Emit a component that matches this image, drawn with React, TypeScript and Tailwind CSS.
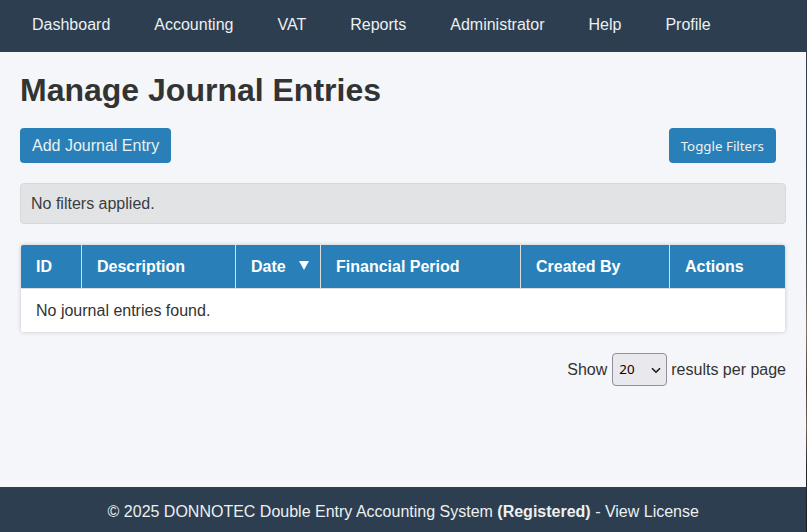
import React from "react";

const nav = ["Dashboard", "Accounting", "VAT", "Reports", "Administrator", "Help", "Profile"];

function Th({ w, children, last }: { w: string; children: React.ReactNode; last?: boolean }) {
  return (
    <div className={`${w} flex items-center px-[15px] font-bold text-white ${last ? "" : "border-r border-[#dddddd]"}`}>
      {children}
    </div>
  );
}

export default function App() {
  return (
    <div className="flex h-[532px] w-full bg-[linear-gradient(180deg,#2d3a4a_0%,#3b4552_40%,#5a5a5c_55%,#8a7468_62%,#4a3a36_72%,#7a6458_80%,#24242c_88%,#1e1e26_100%)]">
      <div className="flex h-full w-[806px] flex-col bg-[#f4f6f9] font-['Liberation_Sans',Arial,sans-serif] text-[16px] text-[#333333]">
        <nav className="flex h-[52px] items-center gap-[44px] bg-[#2c3e50] pb-[2px] pl-[32px] text-[#ecf0f1]">
          {nav.map((n) => (
            <span key={n}>{n}</span>
          ))}
        </nav>
        <main className="flex flex-1 flex-col px-[20px]">
          <h1 className="mt-[20px] text-[32px] leading-[37px] font-bold">Manage Journal Entries</h1>
          <div className="mt-[19px] flex items-center justify-between pr-[10px]">
            <button className="h-[35px] rounded-[4px] bg-[#2980b9] px-[12px] text-[#ecf0f1]">Add Journal Entry</button>
            <button className="h-[35px] rounded-[4px] bg-[#2980b9] px-[12px] pt-[2px] font-['Noto_Sans',sans-serif] text-[13.33px] text-[#ecf0f1]">
              Toggle Filters
            </button>
          </div>
          <div className="mt-[20px] flex h-[41px] items-center rounded-[4px] border border-[#d6d8db] bg-[#e2e3e5] px-[10px] text-[#383d41]">
            No filters applied.
          </div>
          <div className="mx-[1px] mt-[21px] rounded-[2px] bg-white shadow-[0_0_4px_rgba(0,0,0,0.2)]">
            <div className="flex h-[44px] rounded-t-[2px] border-b border-[#dddddd] bg-[#2980b9]">
              <Th w="w-[61px]">ID</Th>
              <Th w="w-[154px]">Description</Th>
              <Th w="w-[85px] justify-between">
                <span>Date</span>
                <svg width="10" height="9" viewBox="0 0 10 9" className="mb-[3px] -mr-[4px]">
                  <path d="M0 0H10L5 9Z" fill="#ffffff" />
                </svg>
              </Th>
              <Th w="w-[200px]">Financial Period</Th>
              <Th w="w-[149px]">Created By</Th>
              <Th w="flex-1" last>
                Actions
              </Th>
            </div>
            <div className="flex h-[43px] items-center px-[15px] pt-[1px]">No journal entries found.</div>
          </div>
          <div className="mt-[21px] flex items-center justify-end">
            <span className="mr-[5px]">Show</span>
            <div className="relative mr-[4px] flex">
              <select
                defaultValue="20"
                className="h-[33px] w-[55px] appearance-none rounded-[4px] border border-[#8f8f9d] bg-[#e9e9ed] pl-[6px] font-['Noto_Sans',sans-serif] text-[13.33px] text-black"
              >
                <option>10</option>
                <option>20</option>
                <option>50</option>
              </select>
              <svg
                width="10"
                height="7"
                viewBox="0 0 10 7"
                className="pointer-events-none absolute top-[14px] left-[39px]"
              >
                <path d="M1 1.2L5 5.2L9 1.2" fill="none" stroke="#1a1a1a" strokeWidth="1.6" />
              </svg>
            </div>
            <span>results per page</span>
          </div>
        </main>
        <footer className="flex h-[45px] items-center justify-center bg-[#2c3e50] pt-[4px] pl-[0.5px] text-[#ecf0f1]">
          <span>
            © 2025 DONNOTEC Double Entry Accounting System <strong>(Registered)</strong> - View License
          </span>
        </footer>
      </div>
    </div>
  );
}
